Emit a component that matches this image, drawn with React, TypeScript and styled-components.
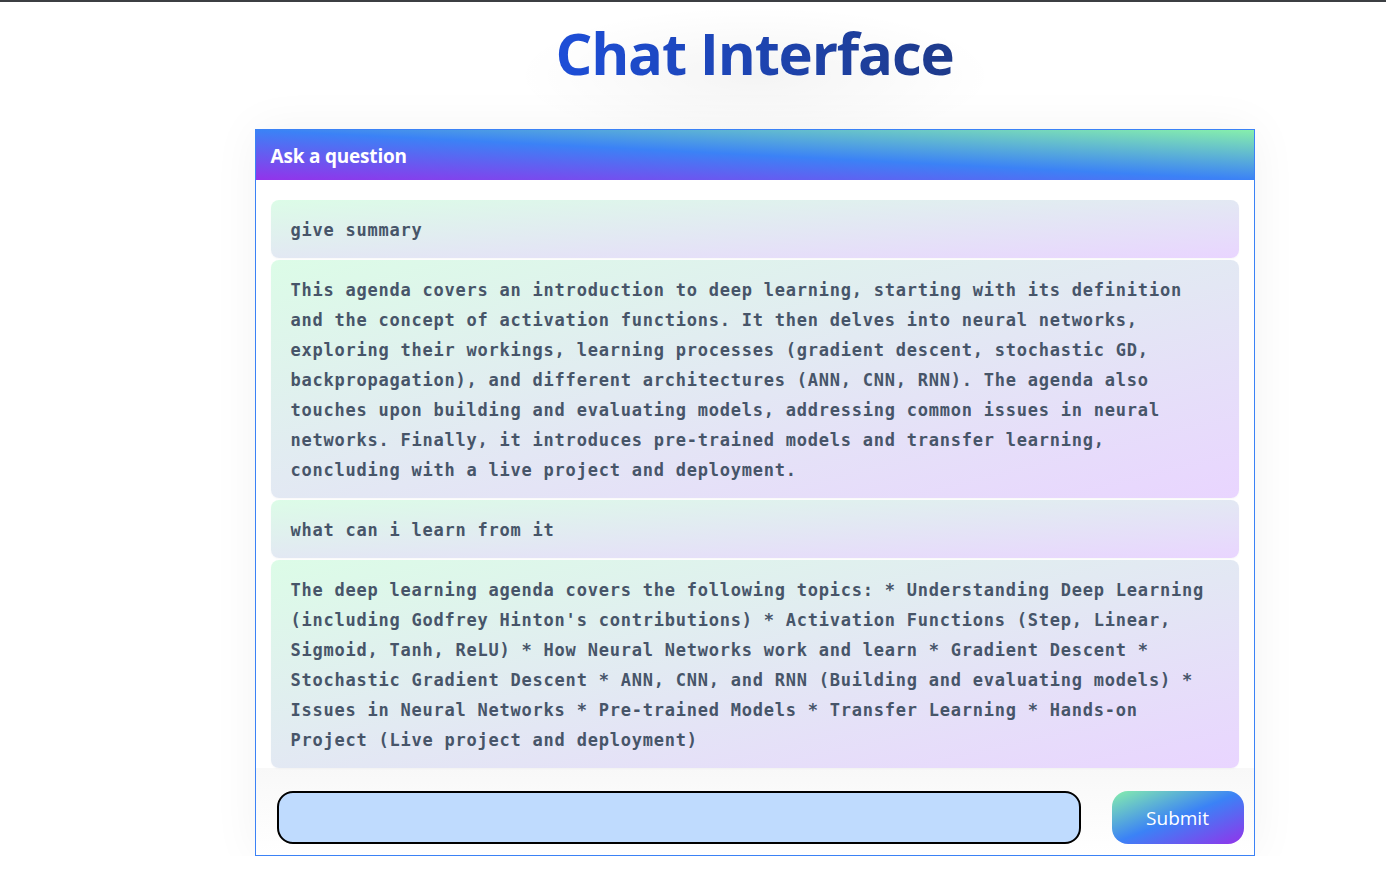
import React, { FC, useState } from "react"
import styled, { createGlobalStyle } from "styled-components";

const messages = [
  "give summary",
  "This agenda covers an introduction to deep learning, starting with its definition and the concept of activation functions. It then delves into neural networks, exploring their workings, learning processes (gradient descent, stochastic GD, backpropagation), and different architectures (ANN, CNN, RNN). The agenda also touches upon building and evaluating models, addressing common issues in neural networks. Finally, it introduces pre-trained models and transfer learning, concluding with a live project and deployment.",
  "what can i learn from it",
  "The deep learning agenda covers the following topics: * Understanding Deep Learning (including Godfrey Hinton's contributions) * Activation Functions (Step, Linear, Sigmoid, Tanh, ReLU) * How Neural Networks work and learn * Gradient Descent * Stochastic Gradient Descent * ANN, CNN, and RNN (Building and evaluating models) * Issues in Neural Networks * Pre-trained Models * Transfer Learning * Hands-on Project (Live project and deployment)",
];

const App: FC = () => {
  const [question, setQuestion] = useState("");

  return (
    <>
      <GlobalStyle />
      <Page>
        <TitleGlow>
          <Title>Chat Interface</Title>
        </TitleGlow>
        <ChatCard>
          <CardHeader>Ask a question</CardHeader>
          <MessageList>
            { messages.map((text, i) => (
              <Message key={ i }>{ text }</Message>
            )) }
          </MessageList>
          <AskForm onSubmit={ e => e.preventDefault() }>
            <QuestionInput
              value={ question }
              onChange={ e => setQuestion(e.target.value) }
            />
            <SubmitButton type="submit">Submit</SubmitButton>
          </AskForm>
        </ChatCard>
      </Page>
    </>
  )
};

const GlobalStyle = createGlobalStyle`
  body {
    margin: 0;
    background: #ffffff;
    border-top: 2px solid #3c3f43;
    font-family: "Open Sans", "Noto Sans", sans-serif;
  }
`;

const Page = styled.div`
  display: flex;
  flex-direction: column;
  align-items: center;
  padding-left: 123px;
`;

const TitleGlow = styled.div`
  display: flex;
  justify-content: center;
  width: 480px;
  padding: 22px 0 47px;
  background: radial-gradient(ellipse 50% 55% at 50% 58%, rgba(0, 0, 0, 0.045), rgba(0, 0, 0, 0) 100%);
`;

const Title = styled.h1`
  margin: 0;
  font-size: 58px;
  line-height: 1;
  font-weight: 700;
  letter-spacing: -1.2px;
  background: linear-gradient(to right, #1d4ed8, #1e3a8a);
  -webkit-background-clip: text;
  background-clip: text;
  color: transparent;
`;

const ChatCard = styled.div`
  width: 1000px;
  box-sizing: border-box;
  border: 1px solid #3b82f6;
  background: #ffffff;
  box-shadow: 0 0 45px rgba(0, 0, 0, 0.05);
`;

const CardHeader = styled.div`
  height: 50px;
  display: flex;
  align-items: center;
  padding: 2px 15px 0;
  box-sizing: border-box;
  color: #ffffff;
  font-size: 19px;
  font-weight: 700;
  letter-spacing: -0.2px;
  background: linear-gradient(to top right, #9333ea, #3b82f6, #86efac);
`;

const MessageList = styled.div`
  display: flex;
  flex-direction: column;
  gap: 2px;
  padding: 20px 15px 0 15px;
`;

const Message = styled.div`
  padding: 15px 20px 13px;
  border-radius: 8px;
  background: linear-gradient(to bottom right, #dcfce7, #e9d5ff);
  box-shadow: 0 1px 2px rgba(0, 0, 0, 0.03);
  color: #475569;
  font-family: "DejaVu Sans Mono", "Liberation Mono", monospace;
  font-size: 17px;
  font-weight: 700;
  letter-spacing: 0.77px;
  line-height: 30px;
`;

const AskForm = styled.form`
  display: flex;
  align-items: center;
  gap: 31px;
  padding: 23px 10px 11px 21px;
  background: linear-gradient(to bottom, #f8f8f8, #ffffff);
`;

const QuestionInput = styled.input`
  flex: 1;
  height: 53px;
  box-sizing: border-box;
  border: 2px solid #000000;
  border-radius: 16px;
  background: #bfdbfe;
  padding: 0 16px;
  font-size: 18px;
  outline: none;
`;

const SubmitButton = styled.button`
  width: 132px;
  height: 53px;
  border: none;
  border-radius: 16px;
  background: linear-gradient(to bottom right, #86efac, #3b82f6, #9333ea);
  color: #ffffff;
  font-family: "Open Sans", "Noto Sans", sans-serif;
  font-size: 19px;
  cursor: pointer;
`;

export default App
